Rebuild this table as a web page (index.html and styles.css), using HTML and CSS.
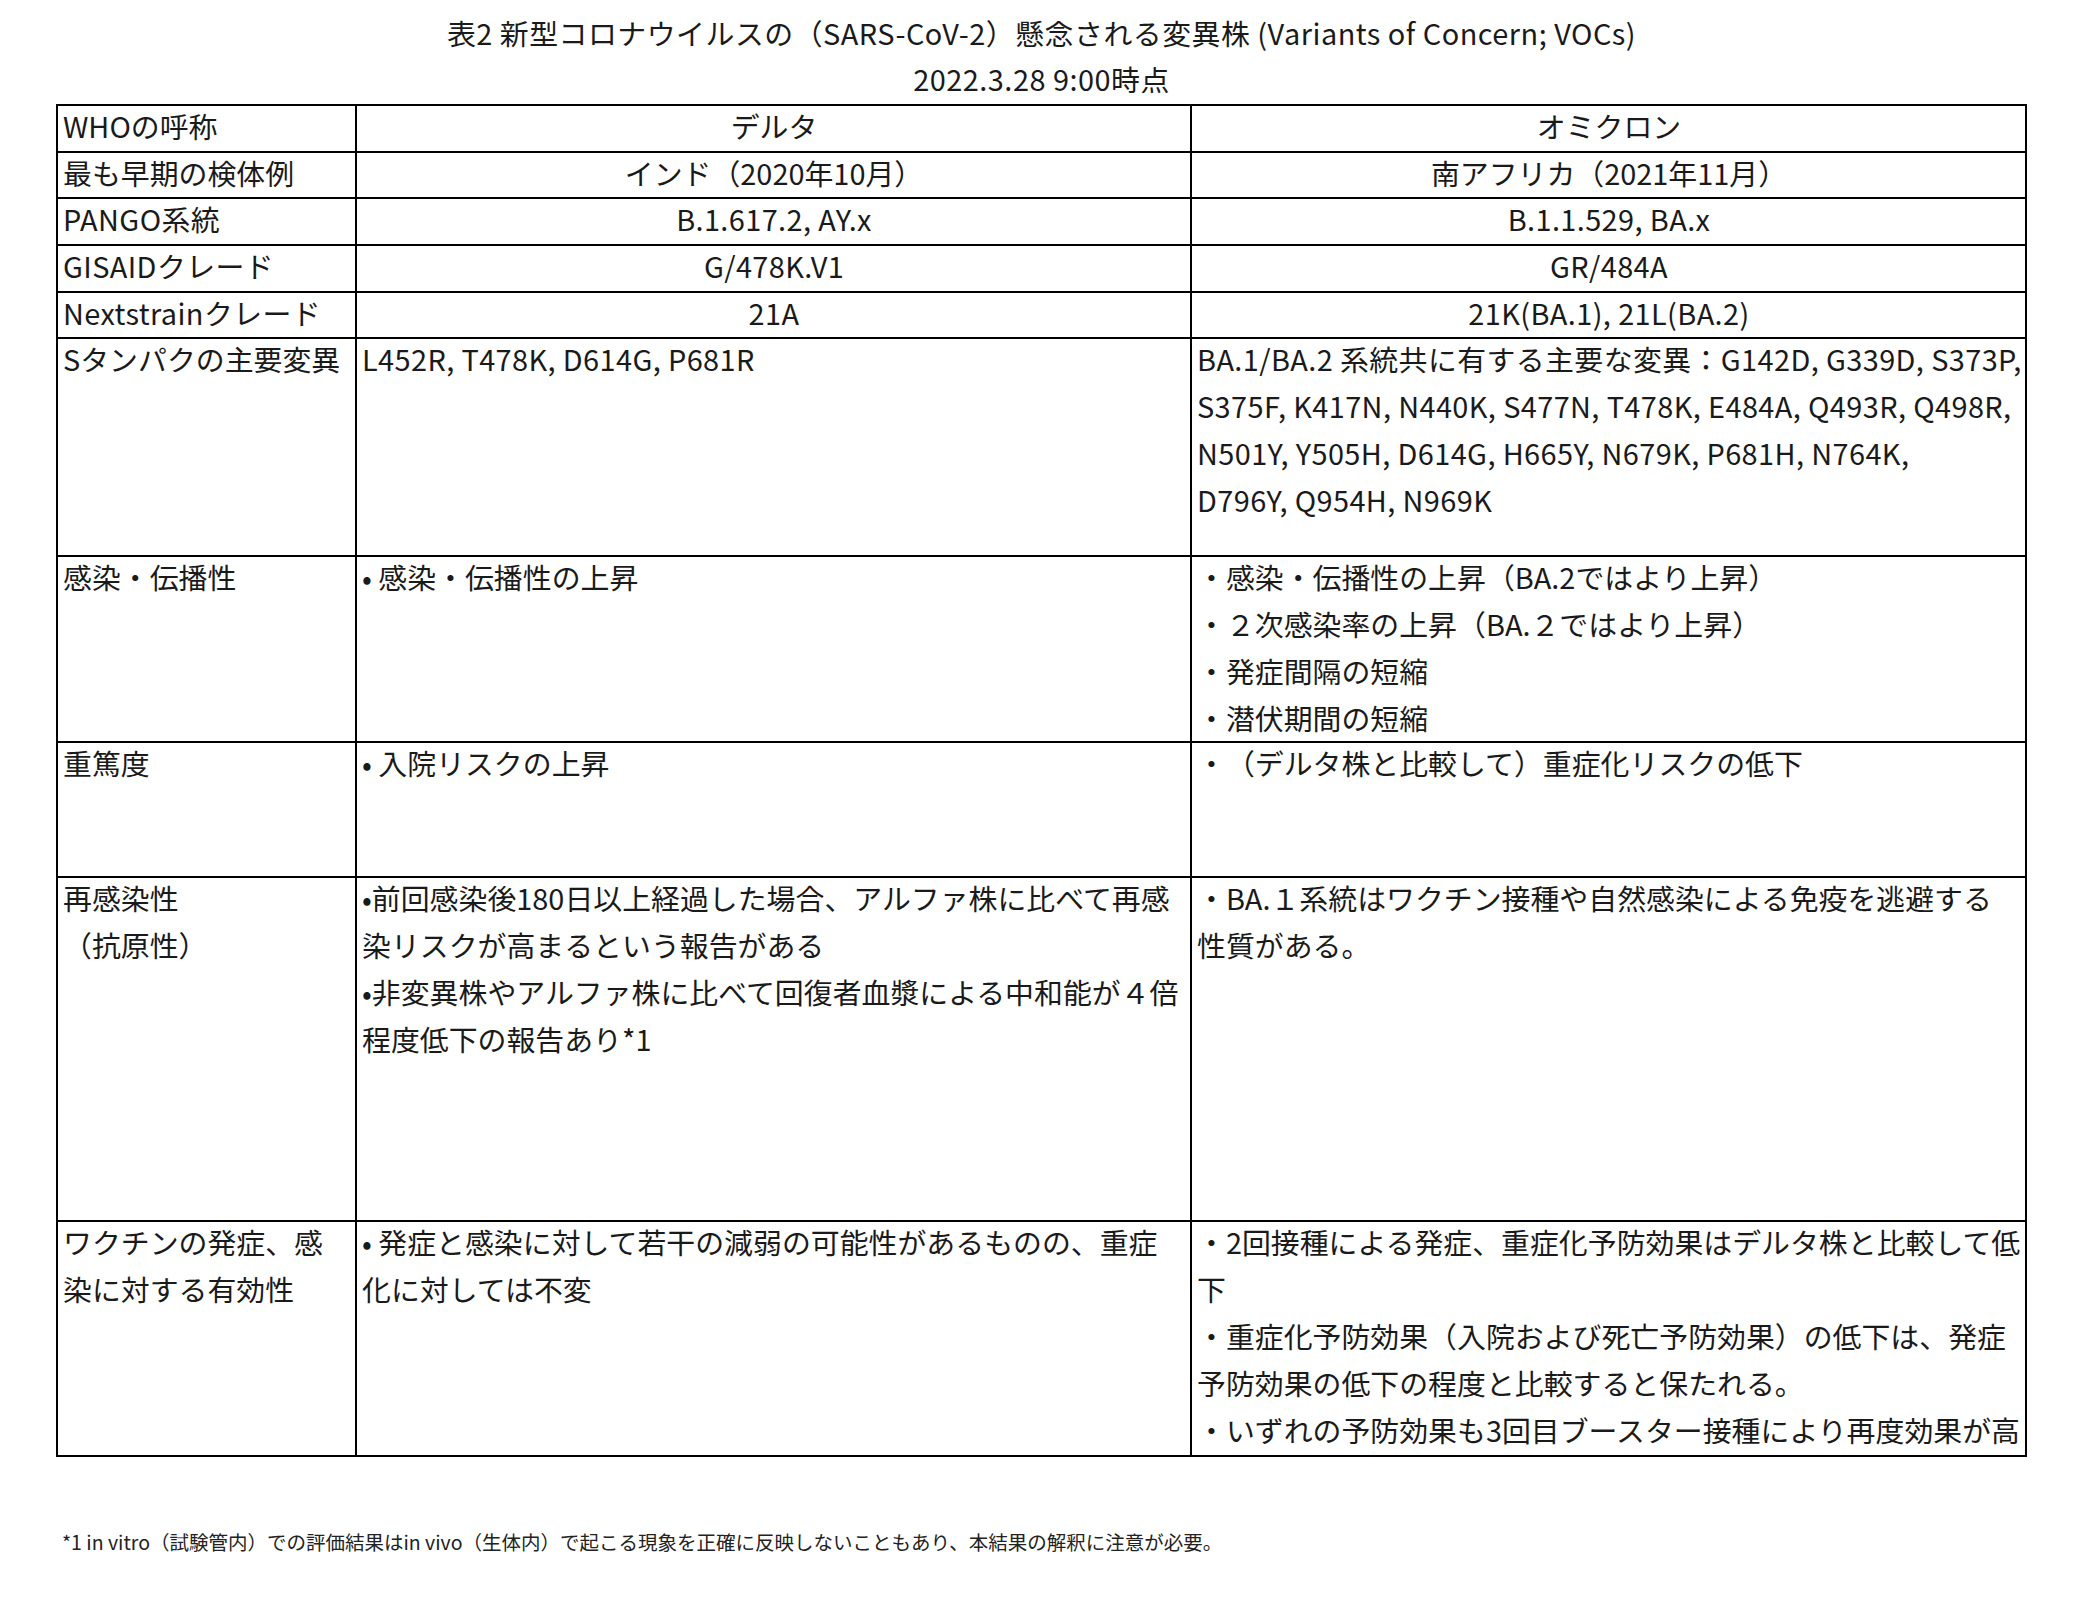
FILE: index.html
```html
<!DOCTYPE html>
<html lang="ja">
<head>
<meta charset="utf-8">
<title>表2 懸念される変異株</title>
<link rel="stylesheet" href="styles.css">
</head>
<body>
<div class="page">
  <div class="heading">
    <div class="title">表2 新型コロナウイルスの（SARS-CoV-2）懸念される変異株 (Variants of Concern; VOCs)</div>
    <div class="date">2022.3.28 9:00時点</div>
  </div>

  <div class="grid">
    <div class="cell"><div class="t">WHOの呼称</div></div>
    <div class="cell center"><div class="t">デルタ</div></div>
    <div class="cell center"><div class="t">オミクロン</div></div>

    <div class="cell"><div class="t">最も早期の検体例</div></div>
    <div class="cell center"><div class="t">インド（2020年10月）</div></div>
    <div class="cell center"><div class="t">南アフリカ（2021年11月）</div></div>

    <div class="cell"><div class="t latin">PANGO系統</div></div>
    <div class="cell center"><div class="t latin">B.1.617.2, AY.x</div></div>
    <div class="cell center"><div class="t latin">B.1.1.529, BA.x</div></div>

    <div class="cell"><div class="t latin">GISAIDクレード</div></div>
    <div class="cell center"><div class="t latin">G/478K.V1</div></div>
    <div class="cell center"><div class="t latin">GR/484A</div></div>

    <div class="cell"><div class="t latin">Nextstrainクレード</div></div>
    <div class="cell center"><div class="t latin">21A</div></div>
    <div class="cell center"><div class="t latin">21K(BA.1), 21L(BA.2)</div></div>

    <div class="cell"><div class="t">Sタンパクの主要変異</div></div>
    <div class="cell"><div class="t latin">L452R, T478K, D614G, P681R</div></div>
    <div class="cell"><div class="t latin">BA.1/BA.2 系統共に有する主要な変異：G142D, G339D, S373P,<br>S375F, K417N, N440K, S477N, T478K, E484A, Q493R, Q498R,<br>N501Y, Y505H, D614G, H665Y, N679K, P681H, N764K,<br>D796Y, Q954H, N969K</div></div>

    <div class="cell"><div class="t">感染・伝播性</div></div>
    <div class="cell"><div class="t">• 感染・伝播性の上昇</div></div>
    <div class="cell"><div class="t">・感染・伝播性の上昇（BA.2ではより上昇）<br>・２次感染率の上昇（BA.２ではより上昇）<br>・発症間隔の短縮<br>・潜伏期間の短縮</div></div>

    <div class="cell"><div class="t">重篤度</div></div>
    <div class="cell"><div class="t">• 入院リスクの上昇</div></div>
    <div class="cell"><div class="t">・（デルタ株と比較して）重症化リスクの低下</div></div>

    <div class="cell"><div class="t">再感染性<br>（抗原性）</div></div>
    <div class="cell"><div class="t">•前回感染後180日以上経過した場合、アルファ株に比べて再感<br>染リスクが高まるという報告がある<br>•非変異株やアルファ株に比べて回復者血漿による中和能が４倍<br>程度低下の報告あり*1</div></div>
    <div class="cell"><div class="t">・BA.１系統はワクチン接種や自然感染による免疫を逃避する<br>性質がある。</div></div>

    <div class="cell"><div class="t">ワクチンの発症、感<br>染に対する有効性</div></div>
    <div class="cell"><div class="t">• 発症と感染に対して若干の減弱の可能性があるものの、重症<br>化に対しては不変</div></div>
    <div class="cell"><div class="t">・2回接種による発症、重症化予防効果はデルタ株と比較して低<br>下<br>・重症化予防効果（入院および死亡予防効果）の低下は、発症<br>予防効果の低下の程度と比較すると保たれる。<br>・いずれの予防効果も3回目ブースター接種により再度効果が高</div></div>
  </div>

  <p class="footnote">*1 in vitro（試験管内）での評価結果はin vivo（生体内）で起こる現象を正確に反映しないこともあり、本結果の解釈に注意が必要。</p>
</div>
</body>
</html>
```

FILE: styles.css
```css
html, body {
  margin: 0;
  padding: 0;
  background: #ffffff;
}

body {
  font-family: "Noto Sans CJK JP", "Noto Sans", sans-serif;
  color: #1a1a1a;
  text-spacing-trim: space-all;
}

.page {
  padding: 9px 0 0 56px;
  width: 1971px;
}

.heading {
  text-align: center;
  font-size: 28.9px;
  line-height: 46px;
  letter-spacing: 0.5px;
  margin-bottom: 3px;
}

.grid {
  display: grid;
  grid-template-columns: 299px 835px 835px;
  grid-template-rows: 46.67px 46.67px 46.67px 46.67px 46.67px 217.33px 186.67px 134.33px 344.33px 235px;
  border-top: 2px solid #000;
  border-left: 2px solid #000;
  font-size: 28.9px;
  line-height: 47px;
}

.cell {
  box-sizing: border-box;
  border-right: 2px solid #000;
  border-bottom: 2px solid #000;
  padding: 0 4px 0 5px;
  white-space: nowrap;
}

.t {
  margin-top: -4px;
}

.latin {
  letter-spacing: 0.4px;
}

.center {
  text-align: center;
}

.footnote {
  margin: 72px 0 0 6px;
  font-size: 19.5px;
  line-height: 26px;
  color: #222;
}
```
